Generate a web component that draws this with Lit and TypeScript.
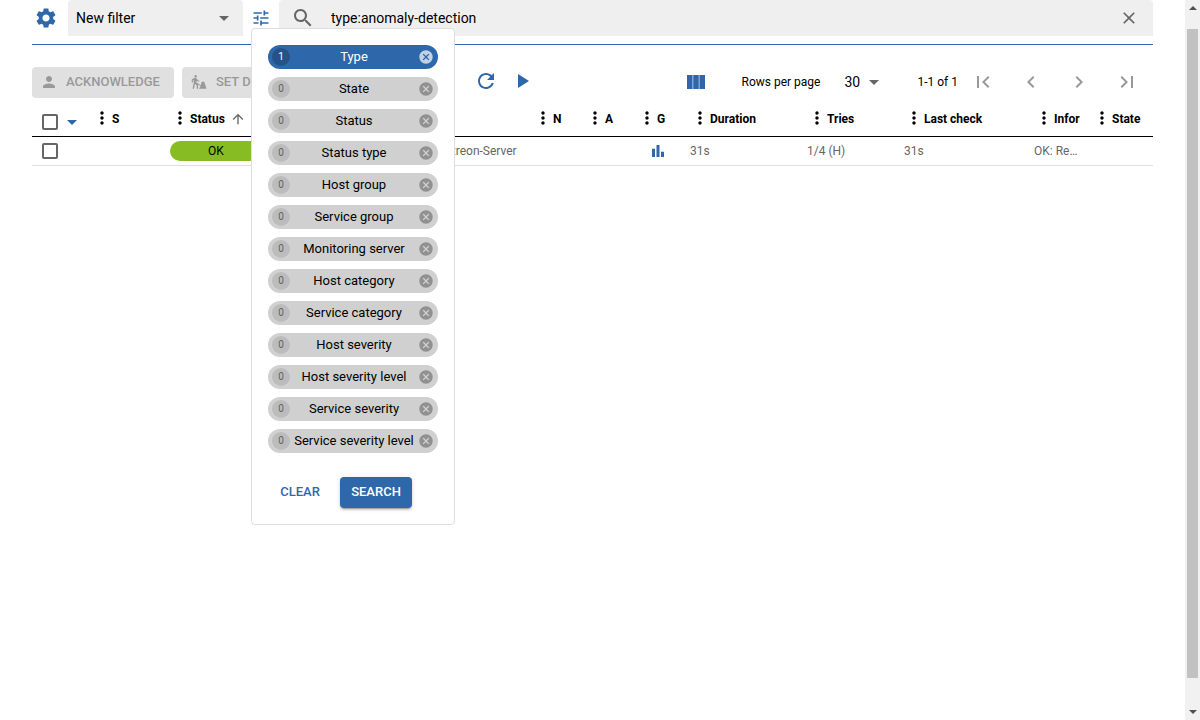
import { LitElement, html, css, svg, nothing } from "lit";
import { customElement, property, state } from "lit/decorators.js";

const ICONS: Record<string, string> = {
  settings:
    "M19.14 12.94c.04-.3.06-.61.06-.94 0-.32-.02-.64-.07-.94l2.03-1.58c.18-.14.23-.41.12-.61l-1.92-3.32c-.12-.22-.37-.29-.59-.22l-2.39.96c-.5-.38-1.03-.7-1.62-.94l-.36-2.54c-.04-.24-.24-.41-.48-.41h-3.84c-.24 0-.43.17-.47.41l-.36 2.54c-.59.24-1.13.57-1.62.94l-2.39-.96c-.22-.08-.47 0-.59.22L2.74 8.87c-.12.21-.08.47.12.61l2.03 1.58c-.05.3-.09.63-.09.94s.02.64.07.94l-2.03 1.58c-.18.14-.23.41-.12.61l1.92 3.32c.12.22.37.29.59.22l2.39-.96c.5.38 1.03.7 1.62.94l.36 2.54c.05.24.24.41.48.41h3.84c.24 0 .44-.17.47-.41l.36-2.54c.59-.24 1.13-.56 1.62-.94l2.39.96c.22.08.47 0 .59-.22l1.92-3.32c.12-.22.07-.47-.12-.61l-2.01-1.58zM12 15.6c-1.98 0-3.6-1.62-3.6-3.6s1.62-3.6 3.6-3.6 3.6 1.62 3.6 3.6-1.62 3.6-3.6 3.6z",
  dropdown: "M7 10l5 5 5-5z",
  tune: "M3 17v2h6v-2H3zM3 5v2h10V5H3zm10 16v-2h8v-2h-8v-2h-2v6h2zM7 9v2H3v2h4v2h2V9H7zm14 4v-2H11v2h10zm-6-4h2V7h4V5h-4V3h-2v6z",
  search:
    "M15.5 14h-.79l-.28-.27C15.41 12.59 16 11.11 16 9.5 16 5.91 13.09 3 9.5 3S3 5.91 3 9.5 5.91 16 9.5 16c1.61 0 3.09-.59 4.23-1.57l.27.28v.79l5 4.99L20.49 19l-4.99-5zm-6 0C7.01 14 5 11.99 5 9.5S7.01 5 9.5 5 14 7.01 14 9.5 11.99 14 9.5 14z",
  close: "M19 6.41L17.59 5 12 10.59 6.41 5 5 6.41 10.59 12 5 17.59 6.41 19 12 13.41 17.59 19 19 17.59 13.41 12z",
  person: "M12 12c2.21 0 4-1.79 4-4s-1.79-4-4-4-4 1.79-4 4 1.79 4 4 4zm0 2c-2.67 0-8 1.34-8 4v2h16v-2c0-2.66-5.33-4-8-4z",
  downtime:
    "M7.500 2.500a1.700 1.700 0 1 1 0 3.400 1.700 1.700 0 0 1 0-3.400zM5 7l3-.6 2 2.600 2.500 1.500-.5 1.200-3-1.500-.5 2.600 2.300 2.700V21H9v-4.500l-2.300-2.300L5.200 21H3.400L5 12.800V9.200l-1.200.8v2.800H2.300V8.800zM9.500 13l6.500 4.500-.6.9L9 14.200zM12 21l2-3.500 1.600-6h3.400L22 21z",
  refresh:
    "M17.65 6.35C16.2 4.9 14.21 4 12 4c-4.42 0-7.99 3.58-7.99 8s3.57 8 7.99 8c3.73 0 6.84-2.55 7.73-6h-2.08c-.82 2.33-3.04 4-5.65 4-3.31 0-6-2.69-6-6s2.69-6 6-6c1.66 0 3.14.69 4.22 1.78L13 11h7V4l-2.350 2.350z",
  play: "M8 5v14l11-7z",
  columns: "M3 5h5.600v14H3zM9.200 5h5.600v14H9.200zM15.400 5H21v14h-5.600z",
  first: "M18.410 16.590L13.820 12l4.590-4.590L17 6l-6 6 6 6zM6 6h2v12H6z",
  prev: "M15.410 7.410L14 6l-6 6 6 6 1.410-1.410L10.830 12z",
  next: "M10 6L8.590 7.410 13.170 12l-4.580 4.590L10 18l6-6z",
  last: "M5.590 7.410L10.180 12l-4.590 4.590L7 18l6-6-6-6zM16 6h2v12h-2z",
  dots: "M12 8c1.100 0 2-.9 2-2s-.9-2-2-2-2 .9-2 2 .9 2 2 2zm0 2c-1.100 0-2 .9-2 2s.9 2 2 2 2-.9 2-2-.9-2-2-2zm0 6c-1.100 0-2 .9-2 2s.9 2 2 2 2-.9 2-2-.9-2-2-2z",
  sort: "M4 12l1.410 1.410L11 7.830V20h2V7.830l5.580 5.590L20 12l-8-8-8 8z",
  chart: "M4 9h4v11H4zM16 13h4v7h-4zM10 4h4v16h-4z",
  cancel:
    "M12 2C6.470 2 2 6.470 2 12s4.470 10 10 10 10-4.470 10-10S17.530 2 12 2zm5 13.590L15.590 17 12 13.410 8.410 17 7 15.590 10.590 12 7 8.410 8.410 7 12 10.590 15.590 7 17 8.410 13.410 12 17 15.590z",
};

const icon = (name: string, size = 24, cls = "") => html`<svg
  class="icon ${cls}" width=${size} height=${size} viewBox="0 0 24 24" aria-hidden="true"
>${svg`<path d=${ICONS[name]}></path>`}</svg>`;

const base = css`
  * { box-sizing: border-box; }
  .icon { display: block; flex: none; fill: currentColor; }
  button, select, input {
    font: inherit; color: inherit; margin: 0; padding: 0;
    border: 0; background: none; outline: 0;
  }
  button { cursor: pointer; }
`;

@customElement("criteria-chip")
class CriteriaChip extends LitElement {
  @property() label = "";
  @property({ type: Number }) count = 0;

  static styles = [base, css`
    :host { display: block; }
    .chip {
      display: flex; align-items: center; height: 24px; padding: 0 4px;
      border-radius: 12px; background: #d0d0d0; color: #000;
    }
    .open { flex: 1; display: flex; align-items: center; min-width: 0; height: 24px; }
    .badge {
      flex: none; width: 18px; height: 18px; border-radius: 50%;
      background: #bcbcbc; color: #616161; font-size: 10px; line-height: 17px; text-align: center;
    }
    .label { flex: 1; font-size: 13px; line-height: 26px; text-align: center; white-space: nowrap; }
    .remove { color: #919191; }
    .active { background: #2e68aa; color: #fff; }
    .active .badge { background: #255388; color: #fff; }
    .active .remove { color: #c0d2e6; }
  `];

  render() {
    return html`<div class="chip ${this.count ? "active" : ""}">
      <button class="open"><span class="badge">${this.count}</span><span class="label">${this.label}</span></button>
      <button class="remove" aria-label="Clear ${this.label}">${icon("cancel", 16)}</button>
    </div>`;
  }
}

const CRITERIAS: [string, number][] = [
  ["Type", 1], ["State", 0], ["Status", 0], ["Status type", 0], ["Host group", 0],
  ["Service group", 0], ["Monitoring server", 0], ["Host category", 0],
  ["Service category", 0], ["Host severity", 0], ["Host severity level", 0],
  ["Service severity", 0], ["Service severity level", 0],
];

const COLUMNS = [
  { id: "severity", label: "S" }, { id: "status", label: "Status" },
  { id: "resource", label: "" }, { id: "parent", label: "" },
  { id: "notes", label: "N" }, { id: "action", label: "A" }, { id: "graph", label: "G" },
  { id: "duration", label: "Duration" }, { id: "tries", label: "Tries" },
  { id: "check", label: "Last check" }, { id: "info", label: "Infor" }, { id: "state", label: "State" },
];

const ROWS: Record<string, unknown>[] = [
  {
    status: html`<span class="status">OK</span>`,
    parent: "Centreon-Server",
    graph: html`<button class="graph" aria-label="Graph">${icon("chart", 18)}</button>`,
    duration: "31s", tries: "1/4 (H)", check: "31s", info: "OK: Re…",
  },
];

@customElement("app-root")
class AppRoot extends LitElement {
  @state() query = "type:anomaly-detection";

  static styles = [base, css`
    :host {
      display: flex; min-height: 100vh; background: #fff; color: #000;
      font-family: Roboto, "Liberation Sans", sans-serif; font-size: 12px; line-height: 16px;
    }
    .page { flex: 1; min-width: 0; padding: 0 32px; }
    .blue { color: #2e68aa; }
    .filters { display: flex; align-items: center; padding-bottom: 8px; border-bottom: 1px solid #2e68aa; }
    .gear { width: 28px; display: grid; place-items: center; margin-right: 8px; }
    .picker { display: grid; align-items: center; color: #666; }
    .picker > * { grid-area: 1 / 1; }
    .picker > .icon { justify-self: end; pointer-events: none; }
    .picker select { appearance: none; width: 100%; color: #000; font-size: 14px; }
    .saved { width: 175px; padding-right: 7px; background: #efefef; border-radius: 4px 4px 0 0; }
    .saved select { height: 36px; padding-left: 8px; }
    .tuner { position: relative; width: 36px; }
    .tune { width: 36px; height: 36px; display: grid; place-items: center; }
    .popup {
      position: absolute; z-index: 2; top: 28px; left: 8px; width: 204px; padding: 16px;
      background: #fff; border: 1px solid #dedede; border-radius: 4px;
    }
    .chips { display: grid; gap: 8px; list-style: none; margin: 0; padding: 0; }
    .actions { display: flex; gap: 8px; margin-top: 24px; }
    .btn {
      display: flex; align-items: center; justify-content: center; height: 31px; padding: 0 10px;
      border-radius: 4px; font-size: 13px; font-weight: 500; white-space: nowrap;
    }
    .text { width: 64px; padding-bottom: 2px; }
    .primary {
      width: 72px; padding-bottom: 2px; background: #2e68aa; color: #fff;
      box-shadow: 0 3px 1px -2px rgba(0,0,0,.2), 0 2px 2px rgba(0,0,0,.14), 0 1px 5px rgba(0,0,0,.12);
    }
    .disabled {
      justify-content: flex-start; gap: 8px; padding-left: 8px;
      background: #e0e0e0; color: #999; cursor: default;
    }
    .ack { min-width: 142px; }
    .search {
      flex: 1; display: flex; align-items: center; height: 36px; padding: 0 14px 0 12px;
      background: #efefef; border-radius: 4px 4px 0 0; color: #666;
    }
    .search input { flex: 1; min-width: 0; margin-left: 16px; color: #000; font-size: 14px; }
    .toolbar { display: flex; align-items: center; margin-top: 18px; height: 38px; }
    .group { display: flex; gap: 8px; width: 442px; flex: none; }
    .tool { display: grid; place-items: center; width: 24px; height: 24px; margin: 0 12px 2px 0; }
    .paging { display: flex; align-items: center; margin-left: auto; padding-right: 14px; }
    .cols { margin-right: 34px; }
    .size { width: 50px; margin: 0 31px 0 16px; }
    .size select { padding-left: 8px; }
    .move { display: flex; gap: 24px; margin-left: 13px; color: #999; }
    table { width: 100%; border-collapse: collapse; table-layout: fixed; }
    th, td { padding: 0; text-align: left; white-space: nowrap; overflow: hidden; }
    th { height: 35px; padding-top: 2px; border-bottom: 1px solid #000; font-weight: 700; }
    td { height: 29px; border-bottom: 1px solid #dedede; color: #666; }
    .head { display: flex; align-items: center; }
    .head .sort { margin: 0 0 0 5px; color: #666; }
    .grip { display: flex; padding-bottom: 2px; cursor: grab; }
    .select-col { width: 60px; }
    .severity { width: 78px; }
    .status-col { width: 92px; }
    .parent { width: 120px; }
    .notes, .action { width: 52px; }
    .graph-col { width: 53px; }
    .duration { width: 117px; }
    .tries { width: 97px; }
    .check { width: 130px; }
    .info { width: 58px; }
    .state { width: 61px; }
    .pick { display: flex; align-items: center; gap: 2px; padding-left: 10px; }
    th .pick { padding-top: 6px; }
    .box {
      appearance: none; width: 16px; height: 16px; border: 2px solid #666; border-radius: 2px;
    }
    .status {
      display: block; height: 20px; border-radius: 10px; background: #87bd23;
      color: #000; line-height: 20px; text-align: center;
    }
    .graph { display: block; margin-left: 12px; color: #2e68aa; }
    .parent-name { padding-left: 18px; }
    .scroll {
      position: sticky; top: 0; flex: none; width: 15px; height: 100vh; padding: 6px 2px;
      display: flex; flex-direction: column; align-items: center; background: #f1f1f1;
    }
    .thumb { width: 11px; flex: 1; margin: 19px 0 32px; background: #c1c1c1; }
    .arrow { display: block; fill: #505050; }
  `];

  private popup() {
    return html`<div class="popup" role="dialog" aria-label="Filter criteria">
      <ul class="chips">${CRITERIAS.map(([label, count]) => html`<li>
        <criteria-chip .label=${label} .count=${count}></criteria-chip></li>`)}</ul>
      <div class="actions">
        <button class="btn text blue">CLEAR</button>
        <button class="btn primary">SEARCH</button>
      </div>
    </div>`;
  }

  private colClass(id: string) {
    return id === "status" ? "status-col" : id === "graph" ? "graph-col" : id;
  }

  render() {
    return html`
      <main class="page">
        <div class="filters">
          <button class="gear blue" aria-label="Edit filters">${icon("settings")}</button>
          <div class="picker saved">
            <select aria-label="Filter"><option>New filter</option></select>${icon("dropdown")}
          </div>
          <div class="tuner">
            <button class="tune blue" aria-label="Search options">${icon("tune", 20)}</button>
            ${this.popup()}
          </div>
          <div class="search">
            ${icon("search")}
            <input aria-label="Search" .value=${this.query} />
            <button aria-label="Clear search" @click=${() => (this.query = "")}>${icon("close", 20)}</button>
          </div>
        </div>
        <div class="toolbar">
          <div class="group">
            <button class="btn disabled ack" disabled>${icon("person", 18)}ACKNOWLEDGE</button>
            <button class="btn disabled" disabled>${icon("downtime", 18)}SET DOWNTIME</button>
          </div>
          <button class="tool blue" aria-label="Refresh">${icon("refresh")}</button>
          <button class="tool blue" aria-label="Enable autorefresh">${icon("play")}</button>
          <div class="paging">
            <button class="cols blue" aria-label="Add columns">${icon("columns")}</button>
            <label for="size">Rows per page</label>
            <div class="picker size">
              <select id="size"><option>30</option></select>${icon("dropdown")}
            </div>
            <span>1-1 of 1</span>
            <div class="move">
              ${["first", "prev", "next", "last"].map((n) => html`<button disabled aria-label="${n} page">${icon(n)}</button>`)}
            </div>
          </div>
        </div>
        <table>
          <colgroup>
            <col class="select-col" />${COLUMNS.map((c) => html`<col class=${this.colClass(c.id)} />`)}
          </colgroup>
          <thead><tr>
            <th><div class="pick"><input class="box" type="checkbox" aria-label="Select all" />
              <button class="blue" aria-label="Selection menu">${icon("dropdown")}</button></div></th>
            ${COLUMNS.map((c) => html`<th><div class="head">
              ${c.label ? html`<span class="grip">${icon("dots", 20)}</span>${c.label}` : nothing}
              ${c.id === "status" ? icon("sort", 16, "sort") : nothing}</div></th>`)}
          </tr></thead>
          <tbody>${ROWS.map((row) => html`<tr>
            <td><div class="pick"><input class="box" type="checkbox" aria-label="Select row" /></div></td>
            ${COLUMNS.map((c) => html`<td><div class=${c.id === "parent" ? "parent-name" : ""}>${row[c.id] ?? nothing}</div></td>`)}
          </tr>`)}</tbody>
        </table>
      </main>
      <div class="scroll" aria-hidden="true">
        <svg class="arrow" width="8" height="4" viewBox="0 0 8 4"><path d="M4 0l4 4H0z"></path></svg>
        <div class="thumb"></div>
        <svg class="arrow" width="8" height="4" viewBox="0 0 8 4"><path d="M0 0h8L4 4z"></path></svg>
      </div>`;
  }
}
